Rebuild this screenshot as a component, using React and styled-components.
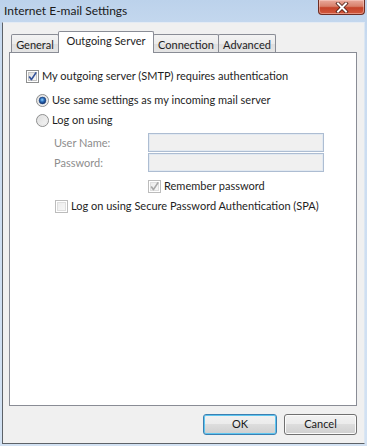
import React from "react";
import styled, { createGlobalStyle } from "styled-components";

const GlobalStyle = createGlobalStyle`
  body {
    margin: 0;
  }
  * {
    box-sizing: border-box;
  }
`;

const Window = styled.div`
  width: 367px;
  height: 446px;
  display: flex;
  flex-direction: column;
  padding: 0 2px 2px 2px;
  background: linear-gradient(180deg, #bcd2eb 0px, #c9dbf0 40px, #d3e2f3 100%);
  font-family: "Segoe UI", Lato, "Noto Sans", sans-serif;
  font-size: 11px;
  color: #1e1e1e;
`;

const TitleBar = styled.div`
  height: 22px;
  display: flex;
  justify-content: space-between;
  align-items: flex-start;
`;

const Title = styled.div`
  padding: 3px 0 0 2px;
  font-size: 12px;
  line-height: 15px;
  color: #1a1a1a;
`;

const CloseButton = styled.div`
  width: 47px;
  height: 15px;
  border: 1px solid #6e2d23;
  border-top: none;
  border-radius: 0 0 4px 4px;
  background: linear-gradient(180deg, #e9a99b 0%, #d8806b 45%, #c5432a 55%, #d2583d 100%);
  box-shadow: inset 0 0 0 1px rgba(255, 220, 210, 0.45);
  display: flex;
  align-items: center;
  justify-content: center;
`;

const Client = styled.div`
  flex: 1;
  display: flex;
  flex-direction: column;
  padding: 8px 7px 8px 6px;
  background: #f0f0f0;
  border: 1px solid;
  border-color: #e4ebf4 #dbe6f2 #5d6268 #5d6268;
`;

const TabStrip = styled.div`
  display: flex;
  align-items: flex-end;
  height: 22px;
  padding-left: 2px;
  margin-bottom: -1px;
`;

const Tab = styled.div`
  width: ${(p) => p.$width}px;
  margin-left: ${(p) => (p.$first ? 0 : -1)}px;
  height: ${(p) => (p.$active ? 22 : 19)}px;
  padding-top: ${(p) => (p.$active ? 2 : 3)}px;
  line-height: 14px;
  text-align: center;
  white-space: nowrap;
  border: 1px solid #898c95;
  border-bottom: none;
  border-radius: 2px 2px 0 0;
  background: ${(p) =>
    p.$active ? "#ffffff" : "linear-gradient(180deg, #f3f3f3 0%, #ebebeb 50%, #dedede 51%, #e6e6e6 100%)"};
  position: ${(p) => (p.$active ? "relative" : "static")};
  z-index: ${(p) => (p.$active ? 1 : "auto")};
`;

const Panel = styled.div`
  flex: 1;
  background: #ffffff;
  border: 1px solid #898c95;
  padding: 13px 0 0 16px;
  display: flex;
  flex-direction: column;
`;

const Row = styled.div`
  height: 20px;
  display: flex;
  align-items: center;
  gap: 3px;
  margin-left: ${(p) => p.$indent || 0}px;
  margin-top: ${(p) => p.$top || 0}px;
`;

const Label = styled.span`
  line-height: 14px;
  white-space: nowrap;
  color: ${(p) => (p.$disabled ? "#8d8d8d" : "#1e1e1e")};
`;

const CredGrid = styled.div`
  display: grid;
  grid-template-columns: 94px 176px;
  grid-auto-rows: 19px;
  row-gap: 1px;
  align-items: center;
  margin: 3px 0 0 28px;
`;

const TextBox = styled.div`
  height: 19px;
  border: 1px solid #adbdd2;
  box-shadow: inset 0 0 0 1px #e2e9f1;
  background: #f0f0f0;
`;

const ButtonRow = styled.div`
  display: flex;
  justify-content: flex-end;
  gap: 7px;
  margin-top: 8px;
`;

const Button = styled.div`
  width: ${(p) => p.$width}px;
  height: 21px;
  border: 1px solid ${(p) => (p.$default ? "#3c7fb1" : "#707070")};
  border-radius: 3px;
  background: linear-gradient(180deg, #f2f2f2 0%, #ebebeb 49%, #dddddd 50%, #cfcfcf 100%);
  box-shadow: inset 0 0 0 1px ${(p) => (p.$default ? "#5ec6f0" : "#fbfbfb")};
  line-height: 18px;
  text-align: center;
  color: #1a1a1a;
`;

const Box = styled.svg`
  display: block;
  flex: none;
`;

const CheckBox = ({ checked, disabled }) => (
  <Box width="13" height="13" viewBox="0 0 13 13">
    <defs>
      <linearGradient id={`cb${disabled ? "d" : "e"}`} x1="0" y1="0" x2="1" y2="1">
        <stop offset="0" stopColor={disabled ? "#ececec" : "#dcdcdc"} />
        <stop offset="1" stopColor={disabled ? "#f7f7f7" : "#fbfbfb"} />
      </linearGradient>
    </defs>
    <rect x="0.5" y="0.5" width="12" height="12" fill="#fff" stroke={disabled ? "#bcbcbc" : "#8e8f8f"} />
    <rect x="2.5" y="2.5" width="8" height="8" fill={`url(#cb${disabled ? "d" : "e"})`} stroke={disabled ? "#dedede" : "#c4c4c4"} />
    {checked && (
      <path
        d="M3.2 6.6 L5.4 9.6 L10.2 2.4"
        fill="none"
        stroke={disabled ? "#a8a8a8" : "#34539a"}
        strokeWidth="1.7"
        strokeLinejoin="round"
      />
    )}
  </Box>
);

const Radio = ({ checked }) => (
  <Box width="13" height="13" viewBox="0 0 13 13">
    <defs>
      <linearGradient id="rbg" x1="0" y1="0" x2="1" y2="1">
        <stop offset="0" stopColor="#d8d8d8" />
        <stop offset="1" stopColor="#fafafa" />
      </linearGradient>
      <radialGradient id="rdot" cx="0.45" cy="0.4" r="0.6">
        <stop offset="0" stopColor="#8bd0ff" />
        <stop offset="0.5" stopColor="#2a6bb8" />
        <stop offset="1" stopColor="#0f2f6b" />
      </radialGradient>
    </defs>
    <circle cx="6.5" cy="6.5" r="6" fill="url(#rbg)" stroke="#8e8f8f" />
    <circle cx="6.5" cy="6.5" r="4.5" fill="none" stroke="#e8e8e8" />
    {checked && <circle cx="6.5" cy="6.5" r="3.4" fill="url(#rdot)" stroke="#1d3f7a" strokeWidth="0.6" />}
  </Box>
);

const CloseGlyph = () => (
  <svg width="14" height="11" viewBox="0 0 14 11">
    <path
      d="M3 1.5 L11 9.5 M11 1.5 L3 9.5"
      stroke="#4a1a12"
      strokeWidth="3.6"
      strokeLinecap="square"
    />
    <path d="M3 1.5 L11 9.5 M11 1.5 L3 9.5" stroke="#ffffff" strokeWidth="2" strokeLinecap="square" />
  </svg>
);

const tabs = [
  { label: "General", width: 48 },
  { label: "Outgoing Server", width: 96, active: true },
  { label: "Connection", width: 66 },
  { label: "Advanced", width: 58 },
];

const App = () => {
  return (
    <>
      <GlobalStyle />
      <Window>
        <TitleBar>
          <Title>Internet E-mail Settings</Title>
          <CloseButton>
            <CloseGlyph />
          </CloseButton>
        </TitleBar>
        <Client>
          <TabStrip>
            {tabs.map((t, i) => (
              <Tab key={t.label} $width={t.width} $active={t.active} $first={i === 0}>
                {t.label}
              </Tab>
            ))}
          </TabStrip>
          <Panel>
            <Row>
              <CheckBox checked />
              <Label>My outgoing server (SMTP) requires authentication</Label>
            </Row>
            <Row $indent={10} $top={4}>
              <Radio checked />
              <Label>Use same settings as my incoming mail server</Label>
            </Row>
            <Row $indent={10}>
              <Radio />
              <Label>Log on using</Label>
            </Row>
            <CredGrid>
              <Label $disabled>User Name:</Label>
              <TextBox />
              <Label $disabled>Password:</Label>
              <TextBox />
            </CredGrid>
            <Row $indent={122} $top={4}>
              <CheckBox checked disabled />
              <Label>Remember password</Label>
            </Row>
            <Row $indent={29}>
              <CheckBox disabled />
              <Label>Log on using Secure Password Authentication (SPA)</Label>
            </Row>
          </Panel>
          <ButtonRow>
            <Button $width={74} $default>
              OK
            </Button>
            <Button $width={73}>Cancel</Button>
          </ButtonRow>
        </Client>
      </Window>
    </>
  );
};

export default App;
